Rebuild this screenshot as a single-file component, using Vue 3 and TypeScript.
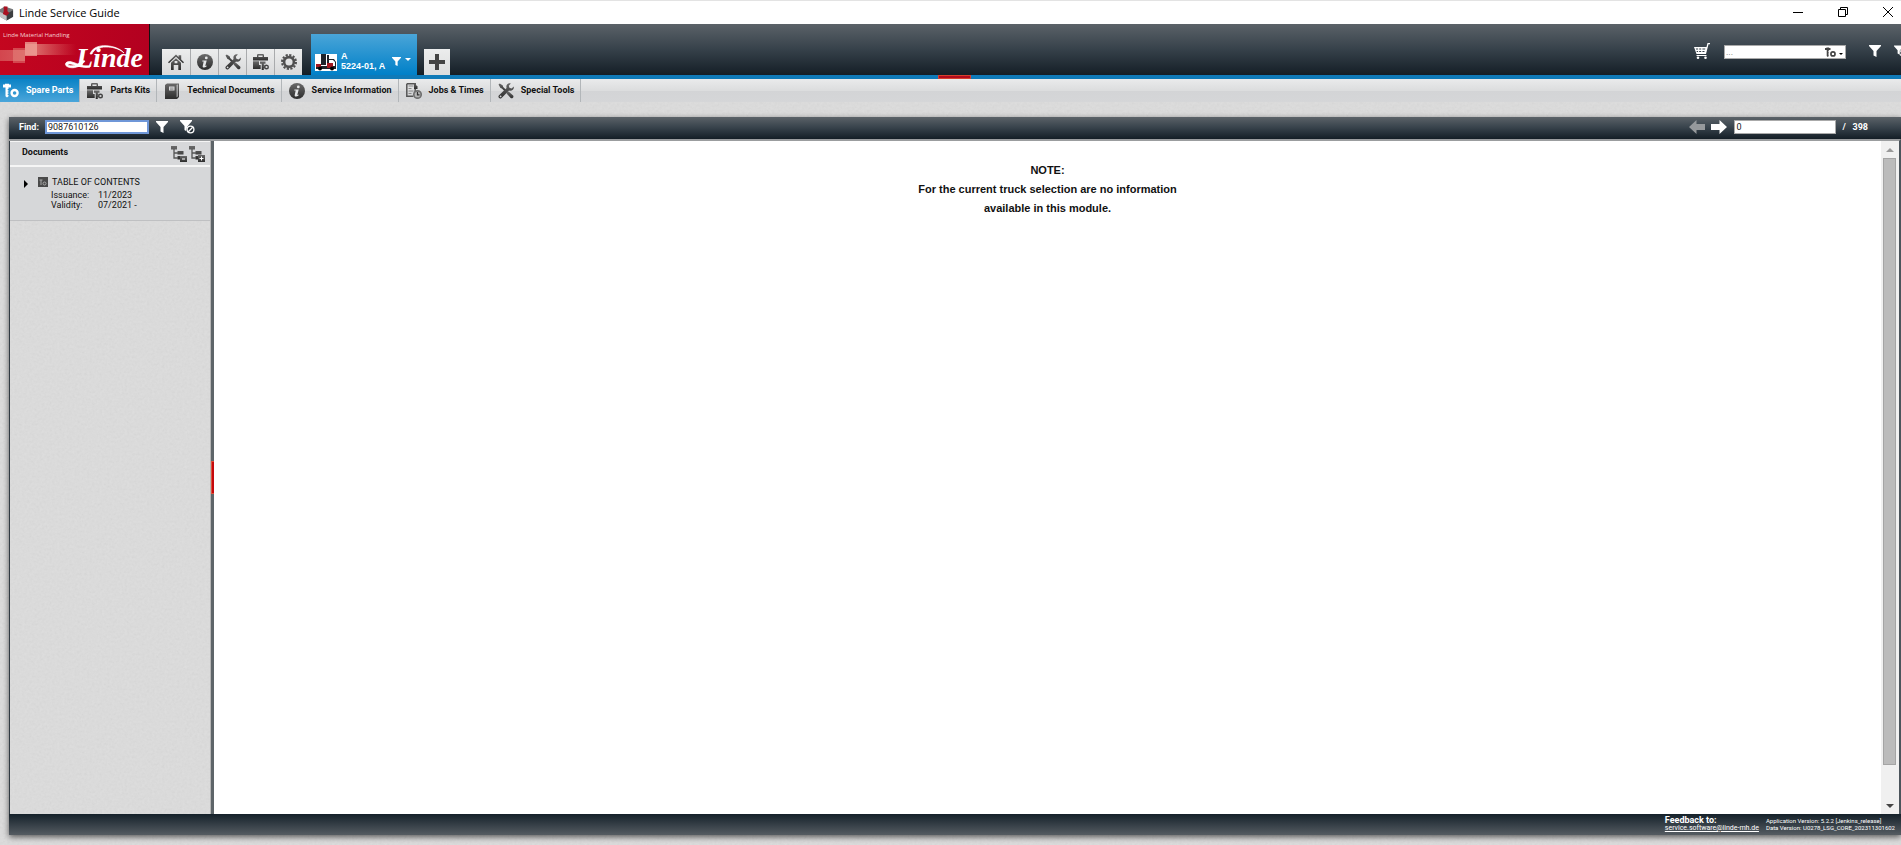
<script setup lang="ts">
import { ref } from 'vue'

interface Item {
  label: string
  icon: string
}

const tools: Item[] = [
  { label: 'Home', icon: 'home' },
  { label: 'Information', icon: 'info' },
  { label: 'Service tools', icon: 'wrench' },
  { label: 'Parts kits', icon: 'kit' },
  { label: 'Settings', icon: 'gear' },
]

const modules: Item[] = [
  { label: 'Spare Parts', icon: 'to' },
  { label: 'Parts Kits', icon: 'kit' },
  { label: 'Technical Documents', icon: 'book' },
  { label: 'Service Information', icon: 'info' },
  { label: 'Jobs & Times', icon: 'jobs' },
  { label: 'Special Tools', icon: 'wrench' },
]

const active = ref('Spare Parts')
const find = ref('9087610126')
const page = ref('0')
const search = ref('')
</script>

<template>
  <svg class="defs" aria-hidden="true">
    <defs>
      <linearGradient id="dark" x1="0" y1="0" x2="0" y2="1">
        <stop offset="0" stop-color="#6a6a6a" />
        <stop offset="1" stop-color="#2c2c2c" />
      </linearGradient>
      <linearGradient id="beam" x1="0" y1="0" x2="1" y2="0">
        <stop offset="0" stop-color="#e07a74" stop-opacity=".55" />
        <stop offset=".5" stop-color="#e58a80" stop-opacity=".7" />
        <stop offset="1" stop-color="#e07a74" stop-opacity="0" />
      </linearGradient>
      <symbol id="home" viewBox="0 0 16 16">
        <path d="M0 8.2 8 .6l2.6 2.5V1.2h2.6v4.4L16 8.2l-1 1.1-7-6.5-7 6.5z" />
        <path d="M3 8.8 8 4.2l5 4.6V16h-2.7v-5H5.7v5H3zM6.6 7v2.2h2.8V7z" fill-rule="evenodd" />
      </symbol>
      <symbol id="info" viewBox="0 0 16 16">
        <circle cx="8" cy="8" r="8" />
        <circle cx="9.3" cy="3.9" r="1.4" fill="#e6e7e8" />
        <path d="M5.4 6.4h4.3L8.400 11.600c-.1.600.4.600 1.300 0l-.2.900c-2 1.500-4.200 1.300-3.800-.6L6.700 7.400H5.200z" fill="#e6e7e8" />
      </symbol>
      <symbol id="wrench" viewBox="0 0 16 16">
        <path d="M.5 1.6 1.8.4l3 2.2.4 1.5 3 3-1.3 1.3-3-3-1.4-.5z" />
        <path d="m9.2 9 1.4-.6 4.5 4.2c1.2 1.3-.9 3.6-2.4 2.4L8.6 10.4z" />
        <path d="M15.8 3.4 13.6 5.4 11.4 4.8 10.8 2.7 12.8.4C10-.5 7.6 2 8.6 4.9L1 12.3c-1.7 1.7.7 4.4 2.6 2.6L11 7.6c3 .9 5.3-1.300 4.800-4.200zM2.600 14.300a.9.9 0 1 1 0-1.800.9.9 0 0 1 0 1.800z" fill-rule="evenodd" />
      </symbol>
      <symbol id="kit" viewBox="0 0 16 16">
        <path d="M4 3V1.200Q4 0 5.200 0h4.600Q11 0 11 1.200V3h4v3.500H0V3zM5.400 3h4.200V1.400H5.400z" fill-rule="evenodd" />
        <path d="M0 7.300h6V11h1.700v4H0z" />
        <path d="M7 7.500h5.500v2.300h-1.700v1h.8v1h-.8v1h.8v1h-.8V16H8.700V9.800H7z" />
        <circle cx="13.500" cy="13" r="1.800" fill="none" stroke="#444" stroke-width="1.400" />
      </symbol>
      <symbol id="gear" viewBox="0 0 16 16">
        <circle cx="8" cy="8" r="4.900" fill="none" stroke="#505050" stroke-width="2.600" />
        <circle cx="8" cy="8" r="7" fill="none" stroke="#505050" stroke-width="2" stroke-dasharray="2.200 1.465" />
      </symbol>
      <symbol id="to" viewBox="0 0 16 16">
        <path d="M0 1.500h2V.700h4v.800h2v3H5.500V6h-.8v1.200h.8v1.200h-.8v1.200h.8v1.200h-.8V12h.8v1.200L4 14.500l-1.500-1.300V4.500H0z" />
        <circle cx="11.600" cy="10" r="3" fill="none" stroke="currentColor" stroke-width="2.400" />
      </symbol>
      <symbol id="book" viewBox="0 0 16 16">
        <path d="M1 2 3 .5h12V14l-2 2H1zM13.300 1.500l-.6.600v12.200l.9-.9V1.500z" fill-rule="evenodd" />
        <path d="M5 3.500h5.500v4H5z" fill="#d8d9da" />
        <path d="M6 5h3.500M6 6.300h3.500" stroke="#777" stroke-width=".7" />
      </symbol>
      <symbol id="jobs" viewBox="0 0 16 16">
        <path d="M.8.800h8.400v8.400M.8.800v12.400h6.500" fill="none" stroke="#555" stroke-width="1.500" />
        <path d="M2.500 3h5M2.500 5.500h3M2.500 8h5M2.500 10.500h3" stroke="#888" stroke-width="1.200" />
        <path d="M8 0l3.500 3.500V6H8z" />
        <circle cx="11.500" cy="11.500" r="3.700" fill="#b4b4b4" stroke="#707070" stroke-width="1.700" />
        <path d="M11.500 9v2.800h2" fill="none" stroke="#333" stroke-width="1.200" />
      </symbol>
      <symbol id="funnel" viewBox="0 0 12 12">
        <path d="M0 0h12v1L7.500 6v6L4.500 10.500V6L0 1z" />
      </symbol>
      <symbol id="nofilter" viewBox="0 0 15 14">
        <path d="M0 0h12v1L9 4.500 7.300 6.500 6 11 4.500 10V6L0 1z" />
        <circle cx="10.500" cy="9.500" r="3.400" fill="#28323a" stroke="#fff" stroke-width="1.300" />
        <path d="m8.300 11.700 4.400-4.400" stroke="#fff" stroke-width="1.300" />
      </symbol>
      <symbol id="cart" viewBox="0 0 16 16">
        <path d="M0 4h12.500l1-4H16v1.200h-1.500L12 11H2.500zM1.800 5.500l.3 1h2v-1zm3.400 0v1h2v-1zm3.200 0v1h2.700l.2-1zM2.500 8l.3 1h1.300V8zm2.700 0v1h2V8zm3.200 0v1h2l.2-1z" fill-rule="evenodd" />
        <path d="M2.500 12h10v1h-10z" />
        <circle cx="4" cy="14.700" r="1.300" /><circle cx="11.500" cy="14.700" r="1.300" />
      </symbol>
      <symbol id="arrow" viewBox="0 0 16 14">
        <path d="M0 4h8.500V0L16 7l-7.500 7v-4H0z" />
      </symbol>
      <symbol id="tree" viewBox="0 0 16 16">
        <path d="M0 0h6v3.500H0zM6.500 5h6v3.500h-6zM6.500 10h3v3.500h-3z" />
        <path d="M3 3v9h4M3 7h4" fill="none" stroke="#555" stroke-width="1.300" />
      </symbol>
    </defs>
  </svg>

  <div class="app">
    <header class="titlebar">
      <svg class="app-icon" viewBox="0 0 15 16" aria-hidden="true">
        <path d="M0 4 5 1l9 3v8l-7 4-7-4z" fill="#77797b" />
        <path d="M7 9l7-4v7l-7 4z" fill="#3d3f41" />
        <path d="M0 7l7 3v6l-7-4z" fill="#c2c3c4" />
        <path d="M4 1h4v5l2 2-3 3-4-2 1-3z" fill="#aa1020" />
      </svg>
      <h1>Linde Service Guide</h1>
      <div class="window-controls">
        <button aria-label="Minimize"><svg viewBox="0 0 10 10"><path d="M0 5.500h10" /></svg></button>
        <button aria-label="Restore"><svg viewBox="0 0 10 10"><path d="M.5 2.500h7v7h-7zM2.500 2.500v-2h7v7h-2" /></svg></button>
        <button aria-label="Close"><svg viewBox="0 0 10 10"><path d="M0 0l10 10M10 0 0 10" /></svg></button>
      </div>
    </header>

    <div class="banner">
      <a class="brand" href="#" aria-label="Linde Material Handling">
        <svg viewBox="0 0 149 51">
          <path d="M0 26h25v11H0zM25 20h51v11H25z" fill="url(#beam)" />
          <path d="M13 24h12v15H13z" fill="#e58a80" fill-opacity=".5" />
          <path d="M25 18h12v14H25z" fill="#f0a79c" fill-opacity=".75" />
          <text x="3" y="13" class="brand-small">Linde Material Handling</text>
          <text x="76" y="43" class="brand-name">Linde</text>
          <path d="M90 30c3-8 12-9 19-8 7 1 13 4 15 7-6-5-12-6-18-6-7 0-12 2-14 7zM85 37c-4 6-12 8-17 6-5-2-2-7 4-5 7 2 11 5 18 5-7 2-13-2-19-3-3-.5-4 1-2 1.500 5 1 10-1 13-5z" fill="#fff" stroke="#fff" stroke-width=".7" />
        </svg>
      </a>
      <nav class="tools" aria-label="Tools">
        <button v-for="tool in tools" :key="tool.icon" :aria-label="tool.label">
          <svg class="icon"><use :href="'#' + tool.icon" /></svg>
        </button>
      </nav>
      <button class="truck">
        <svg class="truck-pic" viewBox="0 0 22 17" aria-hidden="true">
          <path d="M0 0h22v17H0z" fill="#fff" />
          <path d="M6 0h5v11H6zM12 1h2v10h-2zM14 5h5l2 3v6h-1V8l-2-2h-4zM1 12h20v3H1z" fill="#20242a" />
          <path d="M1 10h5v3H1zM12 9h6v5h-6z" fill="#a31820" />
          <circle cx="5" cy="14.500" r="2" fill="#000" /><circle cx="17" cy="14.500" r="2" fill="#000" />
        </svg>
        <span class="truck-text"><span>A</span><span>5224-01, A</span></span>
        <svg class="truck-filter"><use href="#funnel" /></svg>
        <svg class="caret" viewBox="0 0 6 3"><path d="M0 0h6L3 3z" /></svg>
      </button>
      <button class="add" aria-label="Add truck">
        <svg viewBox="0 0 16 16"><path d="M6 0h4v6h6v4h-6v6H6v-6H0V6h6z" /></svg>
      </button>
      <div class="banner-right">
        <button class="plain" aria-label="Cart"><svg class="icon"><use href="#cart" /></svg></button>
        <div class="quick">
          <input v-model="search" placeholder="..." aria-label="Search" />
          <button aria-label="Search type">
            <svg class="to-small"><use href="#to" /></svg>
            <svg class="tiny" viewBox="0 0 6 3"><path d="M0 0h6L3 3z" /></svg>
          </button>
        </div>
        <button class="plain" aria-label="Filter"><svg class="funnel"><use href="#funnel" /></svg></button>
        <button class="plain" aria-label="Clear filter"><svg class="funnel"><use href="#nofilter" /></svg></button>
      </div>
      <span class="handle"></span>
    </div>

    <nav class="modules" aria-label="Modules">
      <a
        v-for="item in modules"
        :key="item.label"
        href="#"
        :class="{ active: active === item.label }"
        @click.prevent="active = item.label"
      >
        <svg class="icon"><use :href="'#' + item.icon" /></svg>
        <span>{{ item.label }}</span>
      </a>
    </nav>

    <div class="workspace">
      <div class="bar">
        <label for="find">Find:</label>
        <input id="find" v-model="find" class="find" />
        <button class="plain" aria-label="Apply filter"><svg class="funnel"><use href="#funnel" /></svg></button>
        <button class="plain second" aria-label="Remove filter"><svg class="nofilter"><use href="#nofilter" /></svg></button>
        <div class="pager">
          <button class="plain prev" aria-label="Previous"><svg class="arrow"><use href="#arrow" /></svg></button>
          <button class="plain" aria-label="Next"><svg class="arrow"><use href="#arrow" /></svg></button>
          <input v-model="page" aria-label="Page" />
          <span>/&nbsp;&nbsp; 398</span>
        </div>
      </div>

      <div class="panes">
        <aside>
          <div class="docs-head">
            <h2>Documents</h2>
            <button class="plain" aria-label="Collapse all">
              <svg class="icon"><use href="#tree" /><path d="M9 10h7v6H9z" /><path d="M11 13h3" stroke="#fff" /></svg>
            </button>
            <button class="plain" aria-label="Expand all">
              <svg class="icon"><use href="#tree" /><path d="M9 9h7v7H9z" /><path d="M10.500 12.500h4M12.500 10.500v4" stroke="#fff" /></svg>
            </button>
          </div>
          <div class="entry">
            <button class="plain expand" aria-label="Expand"><svg viewBox="0 0 4 8"><path d="M0 0l4 4-4 4z" /></svg></button>
            <svg class="entry-icon" viewBox="0 0 10 10" aria-hidden="true">
              <path d="M0 0h10v10H0z" fill="#4a4a4a" />
              <path d="M1.500 3h3M3 3v5" stroke="#aaa" /><circle cx="6.500" cy="6.500" r="1.500" fill="none" stroke="#aaa" />
            </svg>
            <div>
              <h3>TABLE OF CONTENTS</h3>
              <dl>
                <dt>Issuance:</dt><dd>11/2023</dd>
                <dt>Validity:</dt><dd>07/2021 -</dd>
              </dl>
            </div>
          </div>
        </aside>
        <div class="splitter"><span></span></div>
        <main>
          <p>NOTE:<br />For the current truck selection are no information<br />available in this module.</p>
        </main>
        <div class="scroll">
          <button aria-label="Scroll up"><svg class="up" viewBox="0 0 8 4"><path d="M0 4l4-4 4 4z" /></svg></button>
          <div class="track"><span></span></div>
          <button aria-label="Scroll down"><svg viewBox="0 0 8 4"><path d="M0 0h8L4 4z" /></svg></button>
        </div>
      </div>

      <footer>
        <div class="feedback">
          <span>Feedback to:</span>
          <a href="mailto:service.software@linde-mh.de">service.software@linde-mh.de</a>
        </div>
        <div class="version">
          <span>Application Version: 5.2.2 [Jenkins_release]</span>
          <span>Data Version: U0278_LSG_CORE_202311301602</span>
        </div>
      </footer>
    </div>
  </div>
</template>

<style>
body {
  margin: 0;
  overflow: hidden;
}
</style>

<style scoped>
* {
  box-sizing: border-box;
}
.defs {
  position: absolute;
  width: 0;
  height: 0;
}
.app {
  display: flex;
  flex-direction: column;
  height: 100vh;
  overflow: hidden;
  font-family: Roboto, "Liberation Sans", Arial, sans-serif;
  font-size: 9px;
  line-height: 10px;
  color: #111;
}
.app,
aside {
  background: #dcdcdc url("data:image/svg+xml,%3Csvg xmlns='http://www.w3.org/2000/svg' width='200' height='200'%3E%3Cfilter id='n'%3E%3CfeTurbulence type='fractalNoise' baseFrequency='.4' numOctaves='3' stitchTiles='stitch'/%3E%3CfeColorMatrix values='.5 .5 0 0 0 .5 .5 0 0 0 .5 .5 0 0 0 0 0 0 0 1'/%3E%3C/filter%3E%3Crect width='200' height='200' filter='url(%23n)' opacity='.08'/%3E%3C/svg%3E");
}
button {
  display: flex;
  align-items: center;
  justify-content: center;
  margin: 0;
  padding: 0;
  border: 0;
  background: none;
  color: inherit;
  font: inherit;
}
svg {
  display: block;
  flex: none;
}
.icon {
  width: 16px;
  height: 16px;
  fill: url(#dark);
}
input {
  min-width: 0;
  padding: 0 1px;
  border: 1px solid #aaa;
  border-radius: 0;
  background: #fff;
  color: #222;
  font: inherit;
  outline: 0;
}

.titlebar {
  flex: none;
  display: flex;
  align-items: center;
  height: 24px;
  border-top: 1px solid #e3e3e3;
  background: #fff;
}
.app-icon {
  width: 14px;
  height: 16px;
}
h1 {
  margin: 0 0 0 5px;
  font: 400 11px/16px "Open Sans", "Noto Sans", sans-serif;
  color: #000;
}
.window-controls {
  display: flex;
  gap: 35px;
  margin-left: auto;
  padding: 0 8px 2px 0;
}
.window-controls svg {
  width: 10px;
  height: 10px;
  fill: none;
  stroke: #000;
}

.banner {
  position: relative;
  flex: none;
  display: flex;
  align-items: flex-end;
  height: 55px;
  border-bottom: 4px solid #0f7ab8;
  background: linear-gradient(#5b6268, #36414a 50%, #141e26);
}
.brand {
  width: 150px;
  height: 51px;
  border-right: 1px solid #111;
  background: linear-gradient(100deg, #c4061f, #b20020);
}
.brand svg {
  width: 149px;
  height: 51px;
}
.brand-small {
  font: 6px "Open Sans", sans-serif;
  fill: #f5cfd0;
}
.brand-name {
  font: italic bold 28px "Liberation Serif", serif;
  fill: #fff;
}
.tools {
  display: flex;
  margin-left: 12px;
}
.tools button {
  width: 28px;
  height: 26px;
  background: linear-gradient(#eceded, #d8d9da);
}
.tools button + button {
  border-left: 1px solid #a9abad;
}
.truck {
  align-items: flex-end;
  justify-content: flex-start;
  width: 106px;
  height: 41px;
  margin-left: 9px;
  padding: 0 4px 4px;
  background: linear-gradient(#4aa5d8, #0080c8);
  color: #fff;
}
.truck-pic {
  width: 22px;
  height: 17px;
}
.truck-text {
  display: flex;
  flex-direction: column;
  width: 55px;
  padding-left: 4px;
  text-align: left;
  white-space: nowrap;
  font-family: "Liberation Sans", Arial, sans-serif;
  font-weight: bold;
}
.truck-filter {
  width: 9px;
  height: 9px;
  margin-bottom: 5px;
  fill: #fff;
}
.caret {
  width: 6px;
  height: 3px;
  margin: 0 0 10px 4px;
  fill: #fff;
}
.add {
  width: 26px;
  height: 26px;
  margin-left: 7px;
  background: linear-gradient(#eceded, #dcddde);
}
.add svg {
  width: 16px;
  height: 16px;
  fill: #444;
}
.banner-right {
  display: flex;
  align-items: center;
  align-self: stretch;
  margin: 2px -5px 0 auto;
}
.banner-right .icon,
.funnel {
  fill: #fff;
}
.funnel {
  width: 12px;
  height: 12px;
}
.quick {
  display: flex;
  width: 122px;
  height: 14px;
  margin: 2px 23px 0 14px;
  border: 1px solid #aaa;
  background: #fff;
}
.quick input {
  flex: 1;
  border: 0;
}
.quick button {
  align-items: flex-end;
  gap: 3px;
  padding-right: 2px;
  color: #444;
}
.to-small {
  width: 11px;
  height: 11px;
  fill: #444;
}
.tiny {
  width: 4px;
  height: 2px;
  margin-bottom: 3px;
}
.banner-right > button:last-child {
  margin-left: 13px;
}
.handle {
  position: absolute;
  left: 50%;
  bottom: -4px;
  width: 33px;
  height: 4px;
  margin-left: -13px;
  border: 1px solid #d5402c;
  background: #b00a1c;
}

.modules {
  flex: none;
  display: flex;
  height: 23px;
  background: linear-gradient(#eaebec, #dcddde 50%, #d3d4d6 50%, #d5d6d8);
}
.modules a {
  display: flex;
  align-items: center;
  gap: 7px;
  padding: 0 6px 0 7px;
  border-right: 1px solid #b2b6b9;
  color: #111;
  font-weight: bold;
  text-decoration: none;
  white-space: nowrap;
}
.modules span {
  padding-bottom: 2px;
}
.modules .active {
  padding-left: 3px;
  background: linear-gradient(#0a82c6, #4ba6da);
  color: #fff;
}
.modules .active .icon {
  fill: #fff;
}

.workspace {
  flex: 1;
  display: flex;
  flex-direction: column;
  min-height: 0;
  margin: 15px 0 10px 9px;
  box-shadow: 0 2px 6px rgba(0, 0, 0, 0.6);
}
.bar {
  flex: none;
  display: flex;
  align-items: center;
  height: 22px;
  padding: 0 0 2px 10px;
  background: linear-gradient(#5b6268, #36414a 50%, #141e26);
  color: #fff;
  font-weight: bold;
}
.bar input {
  height: 14px;
  font-weight: normal;
}
.bar .find {
  width: 104px;
  margin: 0 7px 0 6px;
  border: 2px solid #6f97d8;
}
.second {
  margin-left: 12px;
}
.nofilter {
  width: 15px;
  height: 14px;
  fill: #fff;
}
.pager {
  display: flex;
  align-items: center;
  margin-left: auto;
  padding-right: 33px;
}
.pager input {
  width: 102px;
  margin: 0 6px 0 7px;
}
.arrow {
  width: 16px;
  height: 14px;
  fill: #fff;
}
.prev {
  margin-right: 6px;
  transform: rotate(180deg);
}
.prev .arrow {
  fill: #96999c;
}

.panes {
  flex: 1;
  display: flex;
  min-height: 0;
  border-top: 2px solid #9b9d9f;
  border-right: 2px solid #4b545b;
  background: #fff;
}
aside {
  width: 202px;
  border-left: 1px solid #303a42;
  border-right: 1px solid #b5b5b5;
}
.docs-head {
  display: flex;
  align-items: center;
  gap: 2px;
  height: 26px;
  padding: 0 5px 0 12px;
  border-top: 1px solid #f5f5f5;
  border-bottom: 2px solid #f5f5f5;
  background: #d7d8da;
}
h2 {
  flex: 1;
  margin: 0;
  padding-bottom: 3px;
  font: inherit;
  font-weight: bold;
}
.entry {
  display: flex;
  height: 54px;
  padding: 10px 0 0 14px;
  border-bottom: 1px solid #bfc0c2;
  background: #d6d7d9;
}
.expand {
  width: 4px;
  height: 8px;
  margin: 3px 10px 0 0;
}
.expand svg {
  width: 4px;
  height: 8px;
}
.entry-icon {
  width: 10px;
  height: 10px;
  margin-right: 4px;
}
h3 {
  margin: 0 0 3px;
  font: inherit;
}
dl {
  display: grid;
  grid-template-columns: 47px auto;
  margin: 0 0 0 -1px;
}
dd {
  margin: 0;
}
.splitter {
  display: flex;
  align-items: center;
  width: 3px;
  background: #5e6569;
}
.splitter span {
  width: 3px;
  height: 33px;
  border: 1px solid #e0513a;
  border-width: 1px 0 1px 1px;
  background: #c4080c;
}
main {
  flex: 1;
}
p {
  margin: 20px 0 0;
  text-align: center;
  font: bold 11px/19px "Liberation Sans", Arial, sans-serif;
}
.scroll {
  display: flex;
  flex-direction: column;
  width: 18px;
  background: #f0f0f0;
}
.scroll button {
  height: 17px;
}
.scroll svg {
  width: 8px;
  height: 4px;
  fill: #444;
}
.scroll .up {
  fill: #999;
}
.track {
  flex: 1;
  padding: 0 3px 0 2px;
}
.track span {
  display: block;
  height: 95%;
  border: 1px solid #a4a4a4;
  background: #bbb;
}

footer {
  flex: none;
  display: flex;
  justify-content: flex-end;
  gap: 7px;
  height: 21px;
  padding: 2px 6px 0 0;
  background: linear-gradient(#15212a, #555c62);
  color: #fff;
  white-space: nowrap;
}
.feedback,
.version {
  display: flex;
  flex-direction: column;
}
.feedback {
  line-height: 8px;
}
.feedback span {
  font-weight: bold;
}
.feedback a {
  font-size: 7px;
  color: #fff;
}
.version {
  padding-top: 1px;
  font-size: 6px;
  line-height: 7px;
}
</style>
